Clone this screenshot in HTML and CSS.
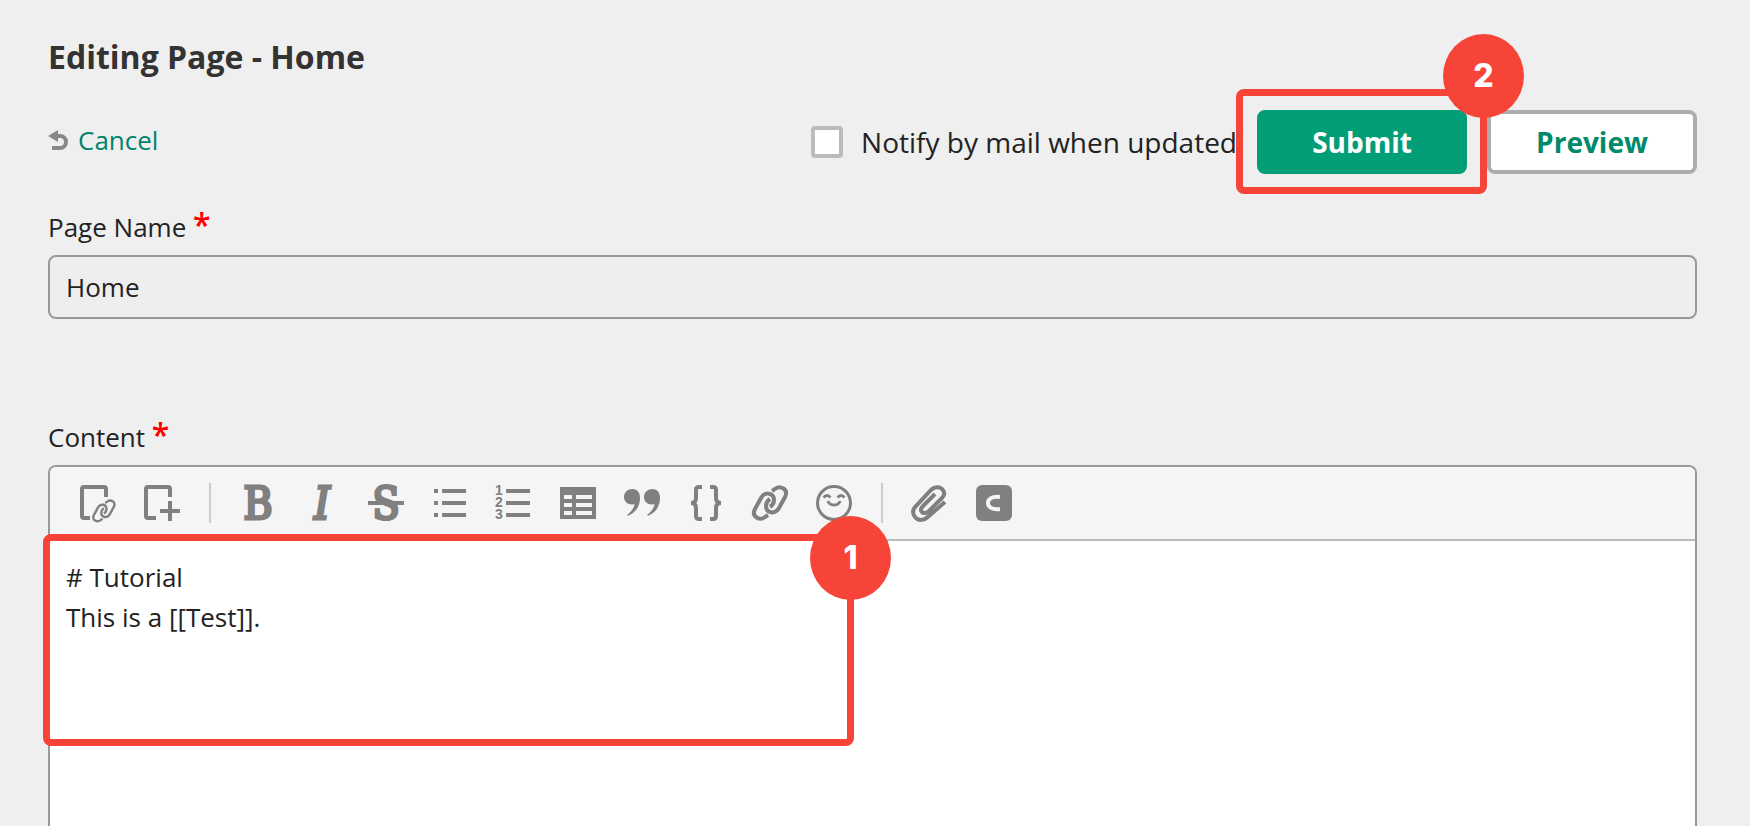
FILE: index.html
```html
<!DOCTYPE html>
<html lang="en">
<head>
  <meta charset="UTF-8">
  <meta name="viewport" content="width=device-width, initial-scale=1.0">
  <title>Editing Page - Home</title>
  <link rel="stylesheet" href="styles.css">
</head>
<body>
  <form class="page">
    <h1 class="title">Editing Page - Home</h1>

    <!-- Actions -->
    <div class="actions">
      <a class="cancel" href="#">
        <svg class="cancel-icon" viewBox="0 0 20 20" aria-hidden="true">
          <path d="M0 6 L10 0 V12 Z" fill="#888"/>
          <path d="M8 6 H12 A5.5 5.5 0 0 1 12 18 H4" fill="none" stroke="#888" stroke-width="4"/>
        </svg>
        Cancel
      </a>
      <input class="notify-box" type="checkbox" id="notify">
      <label class="notify-label" for="notify">Notify by mail when updated</label>
      <div class="submit-wrap">
        <button class="button button-primary" type="submit">Submit</button>
        <div class="mark mark-submit"><span class="mark-number">2</span></div>
      </div>
      <button class="button button-default" type="button">Preview</button>
    </div>

    <!-- Page Name -->
    <div class="field">
      <label class="label" for="pageName">Page Name <span class="required">*</span></label>
      <input class="text-input" type="text" id="pageName" value="Home">
    </div>

    <!-- Content -->
    <div class="field field-content">
      <label class="label" for="content">Content <span class="required">*</span></label>
      <div class="editor">
        <div class="toolbar">
          <button class="tool" type="button" aria-label="Page link">
            <svg class="icon" viewBox="0 0 36 36">
              <path d="M10 33 H4 Q2 33 2 31 V4 Q2 2 4 2 H24 Q26 2 26 4 V12" stroke-width="4"/>
              <g transform="translate(12 14) scale(.66)" stroke-width="3.6">
                <path d="M20 6 L23 4 C28 0 37 4 33 12 L27 23 C23 30 14 28 14 21 C14 18 15 16 18 14"/>
                <path d="M16 30 L13 32 C8 36 -1 32 3 24 L9 13 C13 6 22 8 22 15 C22 18 21 20 18 22"/>
              </g>
            </svg>
          </button>
          <button class="tool" type="button" aria-label="Child page">
            <svg class="icon" viewBox="0 0 36 36">
              <path d="M12 33 H4 Q2 33 2 31 V4 Q2 2 4 2 H24 Q26 2 26 4 V12 M26 16 V36 M16 26 H36" stroke-width="4"/>
            </svg>
          </button>
          <span class="divider"></span>
          <button class="tool" type="button" aria-label="Bold">
            <svg class="icon" viewBox="0 0 36 36"><text class="glyph" x="18" y="34">B</text></svg>
          </button>
          <button class="tool" type="button" aria-label="Italic">
            <svg class="icon" viewBox="0 0 36 36"><text class="glyph glyph-italic" x="18" y="34">I</text></svg>
          </button>
          <button class="tool" type="button" aria-label="Strikethrough">
            <svg class="icon" viewBox="0 0 36 36">
              <text class="glyph" x="18" y="34">S</text>
              <path d="M0 18 H36" stroke-width="4"/>
            </svg>
          </button>
          <button class="tool" type="button" aria-label="Bulleted list">
            <svg class="icon" viewBox="0 0 36 36">
              <path d="M2 6 H6 M10 6 H34 M2 18 H6 M10 18 H34 M2 30 H6 M10 30 H34" stroke-width="4"/>
            </svg>
          </button>
          <button class="tool" type="button" aria-label="Numbered list">
            <svg class="icon" viewBox="0 0 36 36">
              <path d="M10 6 H34 M10 18 H34 M10 30 H34" stroke-width="4"/>
              <text class="number" x="3" y="10">1</text>
              <text class="number" x="3" y="22">2</text>
              <text class="number" x="3" y="34">3</text>
            </svg>
          </button>
          <button class="tool" type="button" aria-label="Table">
            <svg class="icon" viewBox="0 0 36 36">
              <path class="fill" fill-rule="evenodd" d="M0 2 H36 V34 H0 Z M4 10 V14 H12 V10 Z M16 10 V14 H32 V10 Z M4 18 V22 H12 V18 Z M16 18 V22 H32 V18 Z M4 26 V30 H12 V26 Z M16 26 V30 H32 V26 Z"/>
            </svg>
          </button>
          <button class="tool" type="button" aria-label="Quote">
            <svg class="icon" viewBox="0 0 36 36">
              <path class="fill" d="M8 4 C3 4 0 8 0 12 C0 16 3 19.500 8 19.500 C9 19.500 10 19 10.500 19 C10 23 7 27 3 30 Q4 31 5.500 30 C12 27 16 21 16 13 C16 7 13 4 8 4 Z"/>
              <path class="fill" d="M28 4 C23 4 20 8 20 12 C20 16 23 19.500 28 19.500 C29 19.500 30 19 30.500 19 C30 23 27 27 23 30 Q24 31 25.500 30 C32 27 36 21 36 13 C36 7 33 4 28 4 Z"/>
            </svg>
          </button>
          <button class="tool" type="button" aria-label="Code">
            <svg class="icon" viewBox="0 0 36 36">
              <path d="M14 2 H11 Q8 2 8 5 V13 Q8 18 3 18 Q8 18 8 23 V31 Q8 34 11 34 H14" stroke-width="4"/>
              <path d="M22 2 H25 Q28 2 28 5 V13 Q28 18 33 18 Q28 18 28 23 V31 Q28 34 25 34 H22" stroke-width="4"/>
            </svg>
          </button>
          <button class="tool" type="button" aria-label="Link">
            <svg class="icon" viewBox="0 0 36 36">
              <path d="M20 6 L23 4 C28 0 37 4 33 12 L27 23 C23 30 14 28 14 21 C14 18 15 16 18 14" stroke-width="4"/>
              <path d="M16 30 L13 32 C8 36 -1 32 3 24 L9 13 C13 6 22 8 22 15 C22 18 21 20 18 22" stroke-width="4"/>
            </svg>
          </button>
          <button class="tool" type="button" aria-label="Emoji">
            <svg class="icon" viewBox="0 0 36 36">
              <circle cx="18" cy="18" r="16.500" stroke-width="3"/>
              <path d="M7.500 12.500 Q11 8.500 14.500 12.500 M21.500 12.500 Q25 8.500 28.500 12.500 M12 16 Q13 20 18 20 Q23 20 24 16" stroke-width="3"/>
            </svg>
          </button>
          <span class="divider"></span>
          <button class="tool" type="button" aria-label="Attach file">
            <svg class="icon" viewBox="0 0 36 36">
              <path class="clip" d="M33 17 L17 31 C12 36 6 36 3 32 C0 28 1 24 4 21 L19 5 C22 2 27 1 30 4 C33 7 33 10 30 13 L17 26 C15 28 11 29 10 27 C8 25 9 23 11 21 L23 9"/>
            </svg>
          </button>
          <button class="tool" type="button" aria-label="Diagram">
            <svg class="icon" viewBox="0 0 36 36">
              <rect class="fill" width="36" height="36" rx="6"/>
              <path class="logo-mark" d="M24 12 C16 11 12 14 12 18 C12 22 16 25 24 24"/>
            </svg>
          </button>
        </div>
        <div class="editor-body">
          <textarea class="content" id="content"># Tutorial
This is a [[Test]].</textarea>
          <div class="mark mark-content"><span class="mark-number">1</span></div>
        </div>
      </div>
    </div>
  </form>
</body>
</html>
```
FILE: styles.css
```css
* {
  box-sizing: border-box;
}
body {
  margin: 0;
  background-color: #efefef;
  color: #222;
  font-family: "Open Sans", sans-serif;
  font-size: 26px;
}
input, textarea, button {
  margin: 0;
  color: inherit;
  font-family: inherit;
}
.page {
  display: flex;
  flex-direction: column;
  height: 100vh;
  padding: 35px 53px 0 48px;
  overflow: hidden;
}
.title {
  margin: 0 0 31px;
  color: #333;
  font-size: 32px;
  line-height: 44px;
}

/* Actions */
.actions {
  display: flex;
  align-items: center;
  margin-bottom: 35px;
}
.cancel {
  display: flex;
  align-items: center;
  gap: 10px;
  margin-right: auto;
  padding-bottom: 4px;
  color: #00836b;
  text-decoration: none;
}
.cancel-icon {
  width: 20px;
  height: 20px;
}
.notify-box {
  appearance: none;
  width: 32px;
  height: 32px;
  border: 4px solid #bbb;
  border-radius: 4px;
  background-color: #fff;
}
.notify-label {
  padding: 0 20px 0 18px;
  font-size: 28px;
}
.submit-wrap {
  position: relative;
  margin-right: 20px;
}
.button {
  display: block;
  width: 210px;
  height: 64px;
  padding: 0;
  border: 4px solid #adadad;
  border-radius: 8px;
  background-color: #fff;
  color: #00896b;
  font-size: 28px;
  font-weight: bold;
  cursor: pointer;
}
.button-primary {
  border-color: #029e78;
  background-color: #029e78;
  color: #fff;
}

/* Fields */
.field {
  display: flex;
  flex-direction: column;
  gap: 10px;
}
.field-content {
  flex: 1;
  margin-top: 100px;
}
.label {
  line-height: 36px;
}
.required {
  color: #f00;
  font-size: 32px;
  font-weight: 600;
  line-height: 1px;
}
.text-input {
  width: 100%;
  height: 64px;
  padding: 0 16px;
  border: 2px solid #999;
  border-radius: 8px;
  background-color: #eee;
  font-size: 26px;
}

/* Editor */
.editor {
  display: flex;
  flex: 1;
  flex-direction: column;
  border: 2px solid #999;
  border-bottom: none;
  border-radius: 8px 8px 0 0;
  background-color: #fff;
}
.toolbar {
  display: flex;
  align-items: center;
  padding: 0 16px;
  border-bottom: 2px solid #bbb;
  border-radius: 6px 6px 0 0;
  background-color: #f5f5f5;
}
.tool {
  display: flex;
  align-items: center;
  justify-content: center;
  width: 64px;
  height: 72px;
  padding: 0;
  border: none;
  background: none;
  cursor: pointer;
}
.divider {
  width: 2px;
  height: 40px;
  margin: 0 15px;
  background-color: #ccc;
}
.icon {
  width: 36px;
  height: 36px;
  fill: none;
  stroke: #808080;
  overflow: visible;
}
.fill, .number {
  fill: #808080;
  stroke: none;
}
.glyph {
  fill: #808080;
  stroke-width: 3;
  font-family: "DejaVu Serif Condensed", "DejaVu Serif", serif;
  font-size: 44px;
  text-anchor: middle;
}
.glyph-italic {
  font-style: italic;
}
.number {
  font-family: "Liberation Sans", sans-serif;
  font-size: 14px;
  font-weight: bold;
  text-anchor: middle;
}
.clip {
  stroke-width: 4;
}
.logo-mark {
  stroke: #f5f5f5;
  stroke-width: 4;
}
.editor-body {
  position: relative;
  display: flex;
  flex: 1;
}
.content {
  flex: 1;
  padding: 16px;
  border: none;
  outline: none;
  background: none;
  font-size: 26px;
  line-height: 40px;
  resize: none;
}

/* Numbered marks over the form */
.mark {
  position: absolute;
  border: 7px solid #f74438;
  border-radius: 8px;
  pointer-events: none;
}
.mark-submit {
  top: -21px;
  right: -20px;
  bottom: -20px;
  left: -21px;
}
.mark-content {
  top: -7px;
  left: -7px;
  width: 811px;
  height: 212px;
}
.mark-number {
  position: absolute;
  top: -25px;
  right: -44px;
  width: 81px;
  height: 84px;
  border-radius: 50%;
  background-color: #f74438;
  color: #fff;
  font-family: Inter, sans-serif;
  font-size: 32px;
  font-weight: 800;
  line-height: 84px;
  text-align: center;
}
.mark-submit .mark-number {
  top: -62px;
}
```
